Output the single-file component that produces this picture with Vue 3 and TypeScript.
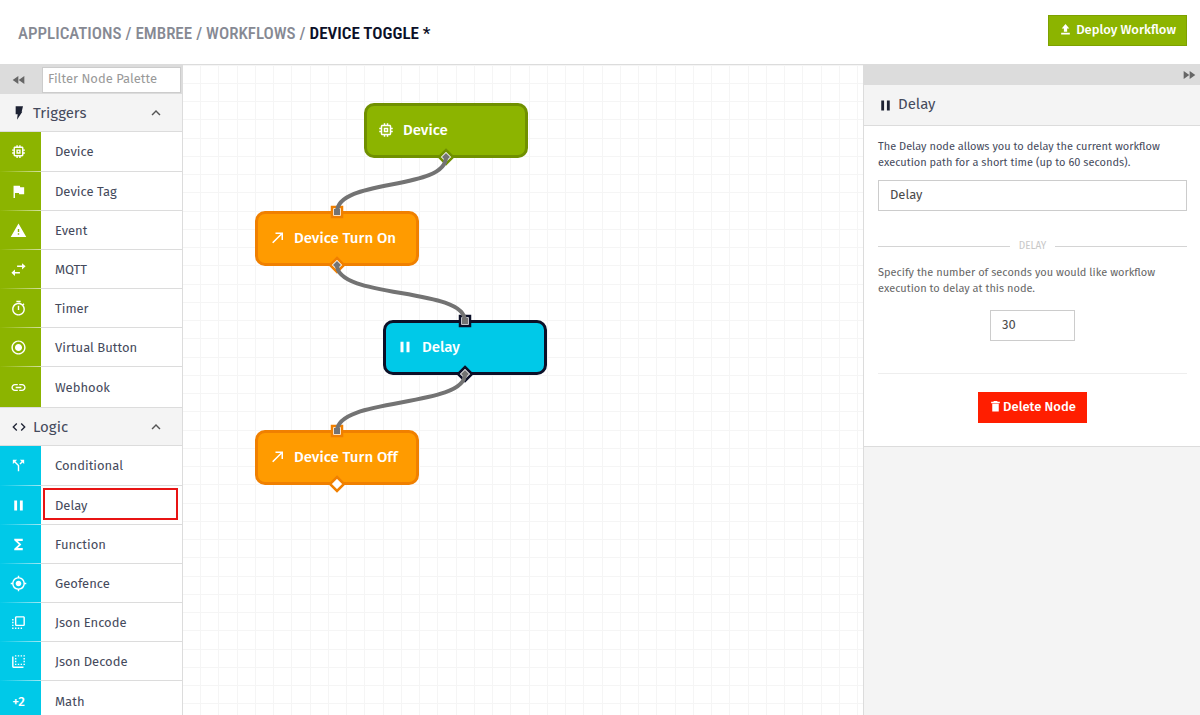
<script setup lang="ts">
import { ref } from 'vue'

interface PaletteItem {
  label: string
  icon: string
  selected?: boolean
}
interface PaletteSection {
  title: string
  icon: string
  tone: string
  items: PaletteItem[]
}
interface FlowNode {
  id: string
  label: string
  icon: string
  tone: string
  x: number
  y: number
  input: boolean
  output: boolean
}

const filter = ref('')
const nodeName = ref('Delay')
const seconds = ref('30')

const crumbs = ['Applications', 'Embree', 'Workflows']

const icons: Record<string, string> = {
  bolt: 'M7 2h11l-2 8h1L9 22l1-8H7z',
  code: 'M9.400 16.600L4.800 12l4.600-4.600L8 6l-6 6 6 6zm5.200 0l4.600-4.600-4.600-4.600L16 6l6 6-6 6z',
  device:
    'M15 9H9v6h6zm-2 4h-2v-2h2zm8-2V9h-2V7c0-1.100-.9-2-2-2h-2V3h-2v2h-2V3H9v2H7c-1.100 0-2 .9-2 2v2H3v2h2v2H3v2h2v2c0 1.100.9 2 2 2h2v2h2v-2h2v2h2v-2h2c1.100 0 2-.9 2-2v-2h2v-2h-2v-2zm-4 6H7V7h10z',
  flag: 'M14.400 6L14 4H5v17h2v-7h5.600l.4 2h7V6z',
  warning: 'M1 21h22L12 2zm12-3h-2v-2h2zm0-4h-2v-4h2z',
  swap: 'M6.990 12L2 16.500 6.990 21v-3.500H14v-2H6.990zM22 7.500L17.010 3v3.500H10v2h7.010V12z',
  timer:
    'M15 1H9v2h6zm-4 13h2V8h-2zm8.030-6.610l1.420-1.420c-.43-.51-.9-.99-1.410-1.410l-1.420 1.420C16.070 4.740 14.120 4 12 4c-4.970 0-9 4.030-9 9s4.020 9 9 9 9-4.030 9-9c0-2.120-.74-4.070-1.970-5.610zM12 20c-3.870 0-7-3.130-7-7s3.130-7 7-7 7 3.130 7 7-3.130 7-7 7z',
  radio:
    'M12 7c-2.760 0-5 2.240-5 5s2.240 5 5 5 5-2.240 5-5-2.240-5-5-5zm0-5C6.480 2 2 6.480 2 12s4.480 10 10 10 10-4.480 10-10S17.520 2 12 2zm0 18c-4.420 0-8-3.580-8-8s3.580-8 8-8 8 3.580 8 8-3.580 8-8 8z',
  link: 'M3.900 12c0-1.710 1.390-3.100 3.100-3.100h4V7H7c-2.760 0-5 2.240-5 5s2.240 5 5 5h4v-1.900H7c-1.710 0-3.100-1.390-3.100-3.100zM8 13h8v-2H8zm9-6h-4v1.900h4c1.710 0 3.100 1.390 3.100 3.100s-1.390 3.100-3.100 3.100h-4V17h4c2.760 0 5-2.240 5-5s-2.240-5-5-5z',
  split: 'M14 4l2.290 2.290-2.880 2.880 1.420 1.420 2.880-2.880L20 10V4zm-4 0H4v6l2.290-2.290 4.710 4.700V20h2v-8.410l-5.290-5.300z',
  pause: 'M6 5h4v14H6zm8 0h4v14h-4z',
  sigma: 'M18 4H6v2l6.500 6L6 18v2h12v-3h-7l5-5-5-5h7z',
  locate:
    'M12 8c-2.210 0-4 1.790-4 4s1.790 4 4 4 4-1.790 4-4-1.790-4-4-4zm8.940 3A8.994 8.994 0 0 0 13 3.060V1h-2v2.060A8.994 8.994 0 0 0 3.060 11H1v2h2.060A8.994 8.994 0 0 0 11 20.940V23h2v-2.060A8.994 8.994 0 0 0 20.940 13H23v-2zM12 19c-3.870 0-7-3.130-7-7s3.130-7 7-7 7 3.130 7 7-3.130 7-7 7z',
  encode:
    'M9 3c-1.110 0-2 .9-2 2v10a2 2 0 0 0 2 2h10c1.100 0 2-.9 2-2V5c0-1.100-.9-2-2-2zm0 2h10v10H9zM3 7h2v2H3zm0 4h2v2H3zm0 4h2v2H3zm0 4h2v2H3zm4 0h2v2H7zm4 0h2v2h-2zm4 0h2v2h-2z',
  decode:
    'M3 5h2v14h14v2H5c-1.100 0-2-.9-2-2zM7 3h2v2H7zm4 0h2v2h-2zm4 0h2v2h-2zm4 0h2v2h-2zM7 7h2v2H7zm12 0h2v2h-2zM7 11h2v2H7zm12 0h2v2h-2zM7 15h2v2H7zm4 0h2v2h-2zm4 0h2v2h-2zm4 0h2v2h-2z',
  arrow: 'M10 4.500v2h6.600L5.500 17.600 7 19.100 18 8v6.500h2v-10z',
  upload: 'M9 16h6v-6h4l-7-8-7 8h4zm-5 2h16v3H4z',
  trash: 'M6 21h12V7H6zM20 3h-4l-1-1H9L8 3H4v3h16z',
  rewind: 'M11 18V6l-8.500 6zm.5-6l8.500 6V6z',
  forward: 'M4 18l8.500-6L4 6zm9-12v12l8.500-6z',
  chevron: 'M12 8l-6 6 1.400 1.400 4.600-4.600 4.600 4.600L18 14z',
}

const sections: PaletteSection[] = [
  {
    title: 'Triggers',
    icon: 'bolt',
    tone: 'green',
    items: [
      { label: 'Device', icon: 'device' },
      { label: 'Device Tag', icon: 'flag' },
      { label: 'Event', icon: 'warning' },
      { label: 'MQTT', icon: 'swap' },
      { label: 'Timer', icon: 'timer' },
      { label: 'Virtual Button', icon: 'radio' },
      { label: 'Webhook', icon: 'link' },
    ],
  },
  {
    title: 'Logic',
    icon: 'code',
    tone: 'blue',
    items: [
      { label: 'Conditional', icon: 'split' },
      { label: 'Delay', icon: 'pause', selected: true },
      { label: 'Function', icon: 'sigma' },
      { label: 'Geofence', icon: 'locate' },
      { label: 'Json Encode', icon: 'encode' },
      { label: 'Json Decode', icon: 'decode' },
      { label: 'Math', icon: 'math' },
    ],
  },
]

// Node positions are the top-left corners on the canvas.
const nodes: FlowNode[] = [
  { id: 'device', label: 'Device', icon: 'device', tone: 'green', x: 181, y: 38, input: false, output: true },
  { id: 'on', label: 'Device Turn On', icon: 'arrow', tone: 'orange', x: 72, y: 146, input: true, output: true },
  { id: 'delay', label: 'Delay', icon: 'pause', tone: 'active', x: 200, y: 255, input: true, output: true },
  { id: 'off', label: 'Device Turn Off', icon: 'arrow', tone: 'orange', x: 72, y: 365, input: true, output: true },
]

const links: [number, number][] = [
  [0, 1],
  [1, 2],
  [2, 3],
]

const portX = (n: FlowNode) => n.x + 82
const outY = (n: FlowNode) => n.y + 54
const inY = (n: FlowNode) => n.y + 1

function wire([from, to]: [number, number]): string {
  const x1 = portX(nodes[from])
  const y1 = outY(nodes[from])
  const x2 = portX(nodes[to])
  const y2 = inY(nodes[to])
  return `M${x1} ${y1}C${x1} ${y1 + 34} ${x2} ${y2 - 34} ${x2} ${y2}`
}
</script>

<template>
  <div class="page">
    <header class="top">
      <nav class="crumbs" aria-label="Breadcrumb">
        <template v-for="c in crumbs" :key="c">
          <a href="#">{{ c }}</a><span class="slash">/</span>
        </template>
        <strong>Device Toggle *</strong>
      </nav>
      <button class="btn deploy" type="button">
        <svg viewBox="0 0 24 24"><path :d="icons.upload" /></svg>
        <span>Deploy Workflow</span>
      </button>
    </header>

    <main class="work">
      <aside class="palette">
        <div class="filter">
          <button class="collapse" type="button" aria-label="Collapse palette">
            <svg viewBox="0 0 24 24"><path :d="icons.rewind" /></svg>
          </button>
          <input v-model="filter" type="text" placeholder="Filter Node Palette" aria-label="Filter Node Palette" />
        </div>
        <section v-for="s in sections" :key="s.title" :class="s.tone">
          <button class="sec-head" type="button">
            <svg class="sec-icon" viewBox="0 0 24 24"><path :d="icons[s.icon]" /></svg>
            <span>{{ s.title }}</span>
            <svg class="chev" viewBox="0 0 24 24"><path :d="icons.chevron" /></svg>
          </button>
          <ul>
            <li v-for="i in s.items" :key="i.label" :class="{ selected: i.selected }">
              <span class="tile">
                <b v-if="i.icon === 'math'">+2</b>
                <svg v-else viewBox="0 0 24 24"><path :d="icons[i.icon]" /></svg>
              </span>
              <span class="name">{{ i.label }}</span>
            </li>
          </ul>
        </section>
      </aside>

      <div class="canvas">
        <svg class="layer" aria-hidden="true">
          <defs>
            <pattern id="grid" width="73" height="73" patternUnits="userSpaceOnUse">
              <path d="M17 0h1v73h-1zM35 0h1v73h-1zM54 0h1v73h-1zM72 0h1v73h-1zM0 0h73v1H0zM0 18h73v1H0zM0 36h73v1H0zM0 54h73v1H0z" fill="#f5f5f5" />
            </pattern>
          </defs>
          <rect width="100%" height="100%" fill="url(#grid)" />
        </svg>
        <div
          v-for="n in nodes"
          :key="n.id"
          class="node"
          :class="n.tone"
          :style="{ left: n.x + 'px', top: n.y + 'px' }"
        >
          <svg viewBox="0 0 24 24"><path :d="icons[n.icon]" /></svg>
          <span>{{ n.label }}</span>
        </div>
        <svg class="layer" aria-hidden="true">
          <g v-for="n in nodes" :key="n.id" class="port" :class="n.tone">
            <rect v-if="n.input" :x="portX(n) - 5" :y="inY(n) - 5" width="10" height="10" />
            <path v-if="n.output" :d="`M${portX(n)} ${outY(n) - 7}l7 7-7 7-7-7z`" />
          </g>
          <g v-for="l in links" :key="l.join('-')" class="wire">
            <path class="line" :d="wire(l)" />
            <rect :x="portX(nodes[l[1]]) - 3" :y="inY(nodes[l[1]]) - 3" width="6" height="6" />
            <path :d="`M${portX(nodes[l[0]])} ${outY(nodes[l[0]]) - 4}l4 4-4 4-4-4z`" />
          </g>
        </svg>
      </div>

      <aside class="inspector">
        <div class="strip">
          <button class="collapse" type="button" aria-label="Collapse inspector">
            <svg viewBox="0 0 24 24"><path :d="icons.forward" /></svg>
          </button>
        </div>
        <h2>
          <svg viewBox="0 0 24 24"><path :d="icons.pause" /></svg>
          <span>Delay</span>
        </h2>
        <form class="body" @submit.prevent>
          <p>The Delay node allows you to delay the current workflow execution path for a short time (up to 60 seconds).</p>
          <input v-model="nodeName" class="field" type="text" aria-label="Node name" />
          <div class="divider"><span>DELAY</span></div>
          <label class="hint" for="secs">Specify the number of seconds you would like workflow execution to delay at this node.</label>
          <input id="secs" v-model="seconds" class="field short" type="text" inputmode="numeric" />
          <hr />
          <button class="btn delete" type="button">
            <svg viewBox="0 0 24 24"><path :d="icons.trash" /></svg>
            <span>Delete Node</span>
          </button>
        </form>
      </aside>
    </main>
  </div>
</template>

<style>
html,
body {
  overflow: hidden;
}
</style>

<style scoped>
.page {
  display: flex;
  flex-direction: column;
  height: 100vh;
  background: #fff;
  color: #454a5c;
  font-family: 'Fira Sans', 'Noto Sans', 'Open Sans', sans-serif;
  font-size: 13px;
}
* {
  box-sizing: border-box;
}
button,
input {
  font-family: inherit;
  border-radius: 0;
  margin: 0;
}
button {
  border: 0;
  padding: 0;
  background: none;
}
svg {
  fill: currentColor;
  flex: none;
}

.top {
  display: flex;
  align-items: center;
  justify-content: space-between;
  flex: none;
  height: 65px;
  padding: 0 13px 4px 18px;
  border-bottom: 1px solid #dcdcdc;
}
.crumbs {
  display: flex;
  align-items: center;
  gap: 4px;
  padding-top: 6px;
  font-family: 'Roboto Condensed', 'Liberation Sans Narrow', sans-serif;
  font-size: 17px;
  line-height: 24px;
  font-weight: 500;
  text-transform: uppercase;
}
.crumbs a,
.slash {
  color: #868993;
  text-decoration: none;
}
.crumbs strong {
  color: #0c1028;
  font-weight: 600;
}
.btn {
  display: inline-flex;
  align-items: center;
  justify-content: center;
  height: 31px;
  padding: 0 11px 2px;
  color: #fff;
  font-size: 13px;
  font-weight: 500;
}
.deploy {
  gap: 4px;
  padding: 0 10px 2px;
  background: #8cb400;
  border: 1px solid #7da100;
}
.btn svg {
  width: 13px;
  height: 13px;
}

.work {
  display: flex;
  flex: 1;
  min-height: 0;
}

.palette {
  flex: none;
  width: 183px;
  overflow: hidden;
  border-right: 1px solid #dcdcdc;
}
.filter {
  display: flex;
  align-items: center;
  height: 29px;
  padding-right: 1px;
  background: #dcdcdc;
}
.collapse {
  display: flex;
  color: #666;
}
.collapse svg {
  width: 16px;
  height: 16px;
}
.filter .collapse {
  width: 42px;
  justify-content: center;
  padding-right: 4px;
}
.filter input {
  flex: 1;
  min-width: 0;
  height: 26px;
  padding: 0 5px 2px;
  border: 1px solid #ccc;
  background: #fff;
  font-size: 13px;
  color: #454a5c;
}
.filter input::placeholder {
  color: #999;
}
.sec-head {
  display: flex;
  align-items: center;
  width: 100%;
  height: 38px;
  padding: 0 17px 0 11px;
  background: #f4f4f4;
  border-bottom: 1px solid #dcdcdc;
  color: #454a5c;
  font-size: 15px;
}
section + section .sec-head {
  height: 39px;
  border-top: 1px solid #dcdcdc;
}
.sec-head span {
  flex: 1;
  padding-left: 6px;
  text-align: left;
}
.sec-icon {
  width: 16px;
  height: 16px;
  color: #1d2233;
}
.chev {
  width: 18px;
  height: 18px;
  color: #555;
}
ul {
  margin: 0;
  padding: 0;
  list-style: none;
}
li {
  position: relative;
  display: flex;
  height: 39px;
}
li:first-child,
li:last-child {
  height: 40px;
}
li.selected::after {
  content: '';
  position: absolute;
  inset: 2px 4px 5px 43px;
  border: 2px solid #e81414;
}
.tile {
  display: flex;
  align-items: center;
  justify-content: center;
  flex: none;
  width: 41px;
  padding-right: 4px;
  color: #fff;
  border-bottom: 1px solid;
}
.tile svg {
  width: 17px;
  height: 17px;
}
.tile b {
  font-size: 13px;
  font-weight: 500;
}
.green .tile {
  background: #8cb400;
  border-image: linear-gradient(90deg, #8cb400, #d5e2a4) 1;
}
.blue .tile {
  background: #00c9e8;
  border-image: linear-gradient(90deg, #00c9e8, #a8e8f3) 1;
}
li:last-child .tile {
  border-bottom: 0;
}
.name {
  flex: 1;
  display: flex;
  align-items: center;
  padding-left: 14px;
  border-bottom: 1px solid #dcdcdc;
}
li:last-child .name {
  border-bottom: 0;
}

.canvas {
  position: relative;
  flex: 1;
  min-width: 0;
  overflow: hidden;
}
.layer {
  position: absolute;
  inset: 0;
  width: 100%;
  height: 100%;
}
.node {
  position: absolute;
  display: flex;
  align-items: center;
  gap: 8px;
  width: 164px;
  height: 55px;
  padding: 0 0 2px 10px;
  border: 3px solid;
  border-radius: 10px;
  color: #fff;
  font-size: 15px;
  font-weight: 500;
}
.node svg {
  width: 18px;
  height: 18px;
}
.node.green {
  background: #8cb400;
  border-color: #709000;
}
.node.orange {
  background: #ff9b00;
  border-color: #f08000;
}
.node.active {
  background: #00c9e8;
  border-color: #0c1028;
}
.port {
  fill: #fff;
  stroke-width: 2.5;
}
.port.green {
  stroke: #709000;
}
.port.orange {
  stroke: #f08000;
}
.port.active {
  stroke: #0c1028;
}
.wire {
  fill: #737373;
}
.line {
  fill: none;
  stroke: #737373;
  stroke-width: 4;
}

.inspector {
  flex: none;
  width: 337px;
  border-left: 1px solid #dcdcdc;
  background: #f4f4f4;
}
.strip {
  display: flex;
  align-items: center;
  justify-content: flex-end;
  height: 20px;
  padding-right: 3px;
  background: #dcdcdc;
}
h2 {
  display: flex;
  align-items: center;
  gap: 4px;
  height: 41px;
  margin: 0;
  padding: 0 13px;
  border-bottom: 1px solid #dcdcdc;
  font-size: 15px;
  font-weight: 400;
}
h2 span {
  padding-bottom: 2px;
}
h2 svg {
  width: 17px;
  height: 17px;
  color: #1d2233;
}
.body {
  display: flex;
  flex-direction: column;
  align-items: center;
  padding: 13px 13px 23px 14px;
  background: #fff;
  border-bottom: 1px solid #dcdcdc;
}
.body p,
.hint {
  width: 100%;
  margin: 0;
  font-size: 11px;
  line-height: 16px;
}
.hint {
  color: #666;
}
.field {
  width: 100%;
  height: 31px;
  margin-top: 9px;
  padding: 0 11px 2px;
  border: 1px solid #ccc;
  background: #fff;
  color: #4a4a4a;
  font-size: 13px;
}
.short {
  width: 85px;
  margin-top: 13px;
}
.divider {
  display: flex;
  align-items: center;
  gap: 9px;
  width: 100%;
  margin: 27px 0 11px;
  color: #c8c8c8;
  font-size: 10px;
  line-height: 16px;
}
.divider::before,
.divider::after {
  content: '';
  flex: 1;
  height: 1px;
  background: #d4d4d4;
}
hr {
  width: 100%;
  height: 1px;
  margin: 32px 0 18px;
  border: 0;
  background: #eee;
}
.delete {
  gap: 1px;
  background: #ff1e00;
}
</style>
